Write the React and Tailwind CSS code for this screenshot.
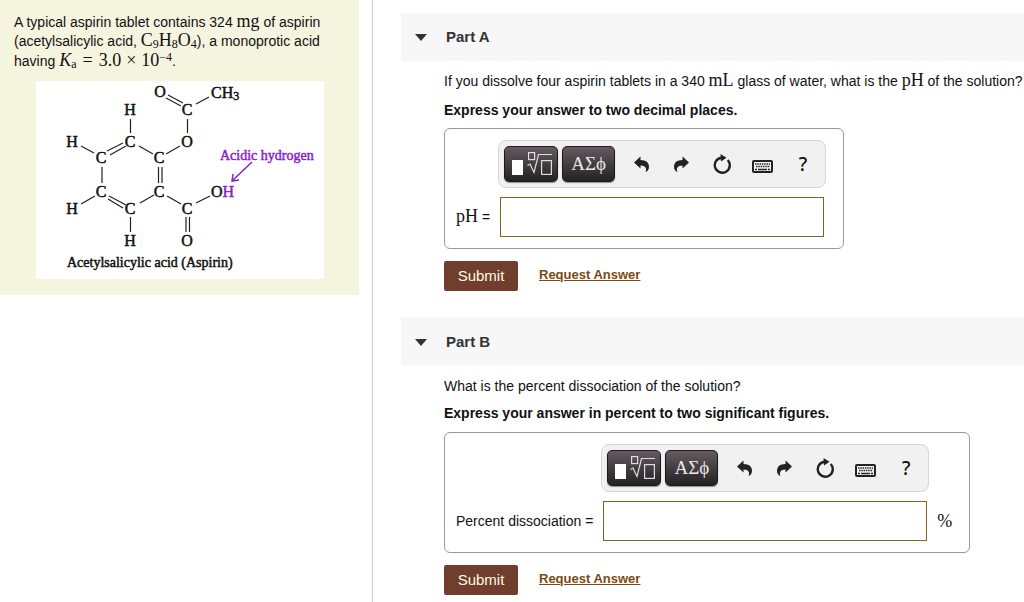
const MATH = "font-['Liberation_Serif',serif] text-[18px] leading-none";

function M({ children, className = '' }) {
  return <span className={`${MATH} ${className}`}>{children}</span>;
}

function Sub({ children }) {
  return <sub className="bottom-[-2px] text-[12px] leading-none">{children}</sub>;
}

const ATOMS = [
  ['O', 124, 11], ['C', 151, 29], ['H', 94, 29], ['H', 36, 61], ['C', 94, 61], ['O', 151, 61],
  ['C', 65, 77], ['C', 123, 77], ['C', 65, 111], ['C', 123, 111], ['H', 36, 128],
  ['C', 94, 128], ['C', 151, 128], ['H', 94, 160], ['O', 151, 160],
];

const BONDS = [
  'M130 17 145 25', 'M132 14 147 22', 'M160 23 173 16', 'M151.5 38V52', 'M94.5 38V52', 'M45 65 58 72',
  'M71 70 87 62', 'M74 74 90 65', 'M103 65 117 73', 'M130 73 144 65', 'M66 86V102',
  'M122.5 86V102', 'M126 86V102', 'M45 123 59 115', 'M73 115 90 124', 'M72 118 87 127',
  'M104 122 118 114', 'M131 115 145 123', 'M160 122 174 115', 'M150 136V151', 'M153.5 136V151',
  'M94.5 136V151',
];

function Aspirin() {
  return (
    <svg
      viewBox="0 0 288 198"
      className="block w-[288px] bg-white font-['Liberation_Serif',serif] text-[16px]"
      role="img"
      aria-label="Structure of acetylsalicylic acid"
    >
      <path d={BONDS.join('')} fill="none" stroke="#222" strokeWidth="1.2" />
      <g fill="#111" stroke="#111" strokeWidth="0.5">
        {ATOMS.map(([s, x, y]) => (
          <text key={`${x}-${y}`} x={x} y={y + 5} textAnchor="middle">{s}</text>
        ))}
        <text x="175" y="17">CH<tspan fontSize="12" dy="2">3</tspan></text>
        <text x="175" y="116">O<tspan fill="#8a1fcb" stroke="#8a1fcb">H</tspan></text>
      </g>
      <g fontSize="14" strokeWidth="0.5">
        <text x="184" y="79" fill="#8a1fcb" stroke="#8a1fcb">Acidic hydrogen</text>
        <text x="31" y="186" fill="#111" stroke="#111">Acetylsalicylic acid (Aspirin)</text>
      </g>
      <path d="M216 81 197 99M197 93 196 100 203 99" fill="none" stroke="#8a1fcb" strokeWidth="1.5" />
    </svg>
  );
}

const ARROW = 'M0 6.500 6.500 .5V4C12 4 15 6.800 15 10.500 15 13.500 14 15 11.500 16 13 13 12 9.500 6.500 9.500V12.500Z';

function Undo() {
  return <svg viewBox="0 0 15 16" className="h-4 w-[15px]"><path d={ARROW} fill="#222" /></svg>;
}

function Redo() {
  return (
    <svg viewBox="0 0 15 16" className="h-4 w-[15px]">
      <path d={ARROW} fill="#222" transform="matrix(-1 0 0 1 15 0)" />
    </svg>
  );
}

function Reset() {
  return (
    <svg viewBox="0 0 18 20" className="h-5 w-[18px]">
      <path d="M14.700 6A7.500 7.500 0 1 1 9 3.700" fill="none" stroke="#222" strokeWidth="2.400" />
      <path d="M7.500 0 13.500 3.800 8 7.500Z" fill="#222" />
    </svg>
  );
}

function Keyboard() {
  return (
    <svg viewBox="0 0 21 13" className="mt-1 h-[13px] w-[21px]">
      <rect x="1" y="1" width="19" height="11" rx="1" fill="#f7f7f7" stroke="#222" strokeWidth="2" />
      <path d="M3 4H18M4 6.500H18" stroke="#222" strokeWidth="1.600" strokeDasharray="1.500 .8" />
      <path d="M3 9.500H5M6 9.500H15M16 9.500H18" stroke="#222" strokeWidth="1.500" />
    </svg>
  );
}

function Template() {
  return (
    <svg viewBox="0 0 42 26" className="h-[26px] w-[42px]">
      <rect x="2" y="9" width="11" height="15" fill="#fff" />
      <g fill="none" stroke="#ddd" strokeWidth="1.200">
        <path d="M17.500 14.500 20 13 24 21.500 28.500 3.500H42" />
        <rect x="18.600" y="1.600" width="6" height="7" />
        <rect x="31.600" y="9.600" width="9.800" height="13.800" />
      </g>
    </svg>
  );
}

const DARK =
  "flex h-9 shrink-0 items-center justify-center rounded-[5px] border border-[#1c191b] bg-linear-to-b from-[#655b60] to-[#252224] shadow-[0_1px_1px_rgba(0,0,0,0.4)]";
const TOOL = 'flex h-9 flex-1 items-center justify-center';

function Toolbar() {
  return (
    <div className="flex h-12 w-[328px] items-center rounded-lg border border-[#d6d6d6] bg-[#f1f1f1] pr-[2px] pl-[5px]" role="toolbar">
      <button className={`${DARK} w-[54px]`} aria-label="Templates"><Template /></button>
      <button className={`${DARK} ml-1 w-[53px] font-['Liberation_Serif',serif] text-[19px] text-[#e8e8e8]`}>ΑΣϕ</button>
      <div className="ml-[6px] flex flex-1">
        <button className={TOOL} aria-label="Undo"><Undo /></button>
        <button className={TOOL} aria-label="Redo"><Redo /></button>
        <button className={TOOL} aria-label="Reset"><Reset /></button>
        <button className={TOOL} aria-label="Keyboard"><Keyboard /></button>
        <button className={`${TOOL} font-['Noto_Sans',sans-serif] text-[19px] font-medium`}>?</button>
      </div>
    </div>
  );
}

function Part({ id, title, question, instruction, label, unit, tight }) {
  return (
    <section>
      <h2>
        <button className="flex h-12 w-full items-center gap-[19px] bg-[#f7f7f7] pl-[14px] text-[15px] font-bold text-[#333]">
          <svg viewBox="0 0 12 7" className="h-[7px] w-3"><path d="M0 0H12L6 7Z" fill="#333" /></svg>
          {title}
        </button>
      </h2>
      <div className="pl-[43px]">
        <p className="pt-[10px] leading-5">{question}</p>
        <p className={`${tight ? 'pt-[7px] pb-[9px]' : 'pt-[9px] pb-2'} font-bold leading-5`}>{instruction}</p>
        <div className="grid w-fit grid-cols-[auto_auto_auto] items-center gap-y-[9px] rounded-md border border-[#999] py-[11px] pr-[17px] pl-[11px]">
          <div className="col-start-2 row-start-1"><Toolbar /></div>
          <label htmlFor={id} className="col-start-1 row-start-2 pr-2 leading-5 whitespace-nowrap">{label}</label>
          <input id={id} type="text" className="col-start-2 row-start-2 mx-[2px] h-10 min-w-0 border border-[#85631c] bg-white px-2 outline-none" />
          {unit && <M className="col-start-3 row-start-2 pl-2">{unit}</M>}
        </div>
        <div className="flex items-center gap-[21px] pt-3 pb-[27px]">
          <button className="h-[30px] w-[74px] rounded-xs bg-[#713d2d] text-[15px] text-[#fffbe9]">Submit</button>
          <a href="#answer" className="pb-[2px] text-[13px] font-bold text-[#7c4a12] underline">Request Answer</a>
        </div>
      </div>
    </section>
  );
}

export default function App() {
  return (
    <div className="flex min-h-screen bg-white font-['Liberation_Sans',Arial,sans-serif] text-[14px] text-[#111]">
      <aside className="w-[373px] shrink-0 border-r border-[#d0cbc8] pr-[13px]">
        <div className="bg-[#f5f4df] pt-3 pb-4">
          <div className="pb-[11px] pl-[14px] leading-[18px]">
            <p>A typical aspirin tablet contains 324 <M>mg</M> of aspirin</p>
            <p>(acetylsalicylic acid, <M>C<Sub>9</Sub>H<Sub>8</Sub>O<Sub>4</Sub></M>), a monoprotic acid</p>
            <p className="pt-px">
              having{' '}
              <M>
                <i>K</i><Sub>a</Sub>
                <span className="mx-[6px]">=</span>3.0<span className="mx-[5px]">×</span>10
                <sup className="top-[-5px] text-[12px] leading-none">−4</sup>
              </M>
              .
            </p>
          </div>
          <div className="pl-9"><Aspirin /></div>
        </div>
      </aside>
      <main className="-mb-2 min-w-0 flex-1 pt-[13px] pl-7">
        <Part
          id="ph"
          title="Part A"
          question={<>If you dissolve four aspirin tablets in a 340 <M>mL</M> glass of water, what is the <M>pH</M> of the solution?</>}
          instruction="Express your answer to two decimal places."
          label={<><M>pH</M> =</>}
        />
        <Part
          id="dissociation"
          title="Part B"
          question="What is the percent dissociation of the solution?"
          instruction="Express your answer in percent to two significant figures."
          label="Percent dissociation ="
          unit="%"
          tight
        />
      </main>
    </div>
  );
}
